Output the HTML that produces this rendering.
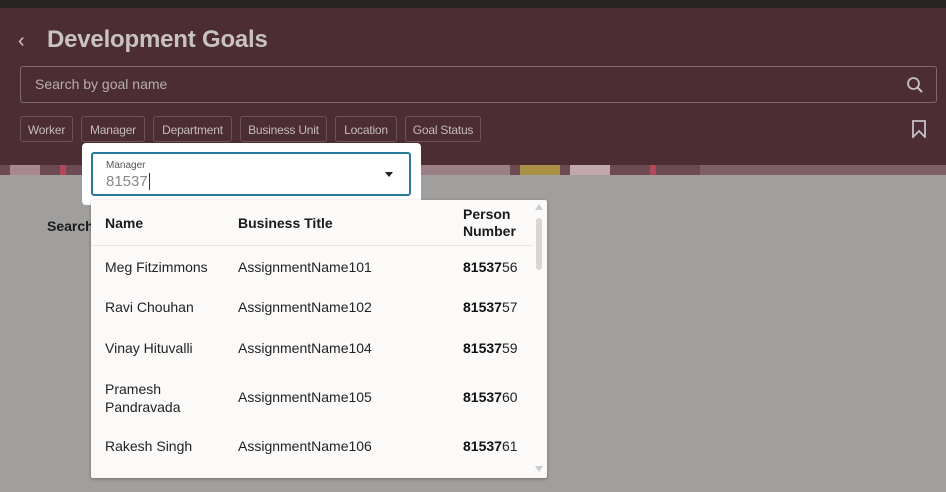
<!DOCTYPE html>
<html><head><meta charset="utf-8"><style>
*{margin:0;padding:0;box-sizing:border-box}
body{width:946px;height:492px;overflow:hidden;background:#a09f9d;font-family:"Liberation Sans",sans-serif;position:relative}
.top{position:absolute;left:0;top:0;width:946px;height:8px;background:#282421}
.hdr{position:absolute;left:0;top:8px;width:946px;height:157px;background:#4b2d33}
.band{position:absolute;left:0;top:165px;width:946px;height:10px;background:#6e4a52;overflow:hidden}
.title{position:absolute;left:47px;top:26px;font-size:24px;font-weight:bold;color:#c8c2c2;letter-spacing:-0.2px}
.back{position:absolute;left:18px;top:30px;color:#d0c8c8;font-size:20px}
.search{position:absolute;left:20px;top:66px;width:917px;height:37px;border:1px solid #7d6a6e;border-radius:3px;color:#b7aeb0;font-size:14px;padding:9px 14px}
.chip{position:absolute;top:116px;height:26px;border:1px solid #6c5459;border-radius:3px;color:#c4bcbd;font-size:12px;padding-top:6px;text-align:center;white-space:nowrap;letter-spacing:-0.2px}
.pop{position:absolute;left:82px;top:143px;width:339px;height:62px;background:#fff;border-radius:4px}
.inp{position:absolute;left:91px;top:152px;width:320px;height:44px;border:2px solid #2b7a99;border-radius:3px;background:#fff}
.lst{position:absolute;left:91px;top:200px;width:456px;height:278px;background:#fbfaf9;border-radius:2px;box-shadow:0 1px 3px rgba(0,0,0,.3)}
.c{position:absolute;font-size:14px;color:#222}
.h{font-weight:bold;color:#1a1a1a}
b{font-weight:bold;color:#111}
</style></head><body>
<div class="top"></div>
<div class="hdr"></div>
<div class="band">
<div style="position:absolute;left:10px;top:0;width:30px;height:10px;background:#a88890"></div>
<div style="position:absolute;left:60px;top:0;width:6px;height:10px;background:#b04a5a"></div>
<div style="position:absolute;left:420px;top:0;width:90px;height:10px;background:#9a7f86"></div>
<div style="position:absolute;left:520px;top:0;width:40px;height:10px;background:#a99044"></div>
<div style="position:absolute;left:570px;top:0;width:40px;height:10px;background:#c0a8ad"></div>
<div style="position:absolute;left:650px;top:0;width:6px;height:10px;background:#b04a5a"></div>
<div style="position:absolute;left:700px;top:0;width:246px;height:10px;background:#7d6066"></div>
</div>
<div class="back">&#8249;</div>
<div class="title">Development Goals</div>
<div class="search">Search by goal name
<svg style="position:absolute;right:12px;top:9px" width="18" height="18" viewBox="0 0 18 18"><circle cx="7.5" cy="7.5" r="5.5" fill="none" stroke="#c8c0c2" stroke-width="1.8"/><line x1="11.5" y1="11.5" x2="16" y2="16" stroke="#c8c0c2" stroke-width="2"/></svg></div>
<div class="chip" style="left:20px;width:53px">Worker</div>
<div class="chip" style="left:81px;width:64px">Manager</div>
<div class="chip" style="left:153px;width:79px">Department</div>
<div class="chip" style="left:240px;width:87px">Business Unit</div>
<div class="chip" style="left:335px;width:62px">Location</div>
<div class="chip" style="left:405px;width:76px">Goal Status</div>
<svg style="position:absolute;left:911px;top:120px" width="16" height="18" viewBox="0 0 16 18"><path d="M2 1H14V17L8 11L2 17Z" fill="none" stroke="#c8c0c8" stroke-width="1.8"/></svg>
<div style="position:absolute;left:47px;top:218px;font-size:14px;font-weight:bold;color:#1a1a1a">Search</div>
<div class="pop"></div>
<div class="inp">
<div style="position:absolute;left:13px;top:6px;font-size:10px;color:#555">Manager</div>
<div style="position:absolute;left:13px;top:19px;font-size:15px;color:#888;border-right:1px solid #333;padding-right:1px;line-height:17px">81537</div>
<div style="position:absolute;left:292px;top:18px;width:0;height:0;border-left:4.5px solid transparent;border-right:4.5px solid transparent;border-top:5px solid #222"></div>
</div>
<div class="lst">
<div style="position:absolute;left:0;top:45px;width:442px;height:1px;background:#e8e6e4"></div>
<div style="position:absolute;left:445px;top:18px;width:6px;height:52px;background:#d8d6d4;border-radius:3px"></div>
<div style="position:absolute;left:444px;top:4px;width:0;height:0;border-left:4px solid transparent;border-right:4px solid transparent;border-bottom:6px solid #ccc"></div>
<div style="position:absolute;left:444px;top:266px;width:0;height:0;border-left:4px solid transparent;border-right:4px solid transparent;border-top:6px solid #ccc"></div>
<div class="c h" style="left:14px;top:15px">Name</div>
<div class="c h" style="left:147px;top:15px">Business Title</div>
<div class="c h" style="left:372px;top:6px;line-height:17px">Person<br>Number</div>
<div class="c" style="left:14px;top:59px">Meg Fitzimmons</div><div class="c" style="left:147px;top:59px">AssignmentName101</div><div class="c" style="left:372px;top:59px"><b>81537</b>56</div>
<div class="c" style="left:14px;top:99px">Ravi Chouhan</div><div class="c" style="left:147px;top:99px">AssignmentName102</div><div class="c" style="left:372px;top:99px"><b>81537</b>57</div>
<div class="c" style="left:14px;top:140px">Vinay Hituvalli</div><div class="c" style="left:147px;top:140px">AssignmentName104</div><div class="c" style="left:372px;top:140px"><b>81537</b>59</div>
<div class="c" style="left:14px;top:180px;line-height:18px">Pramesh<br>Pandravada</div><div class="c" style="left:147px;top:189px">AssignmentName105</div><div class="c" style="left:372px;top:189px"><b>81537</b>60</div>
<div class="c" style="left:14px;top:238px">Rakesh Singh</div><div class="c" style="left:147px;top:238px">AssignmentName106</div><div class="c" style="left:372px;top:238px"><b>81537</b>61</div>
</div>
</body></html>
